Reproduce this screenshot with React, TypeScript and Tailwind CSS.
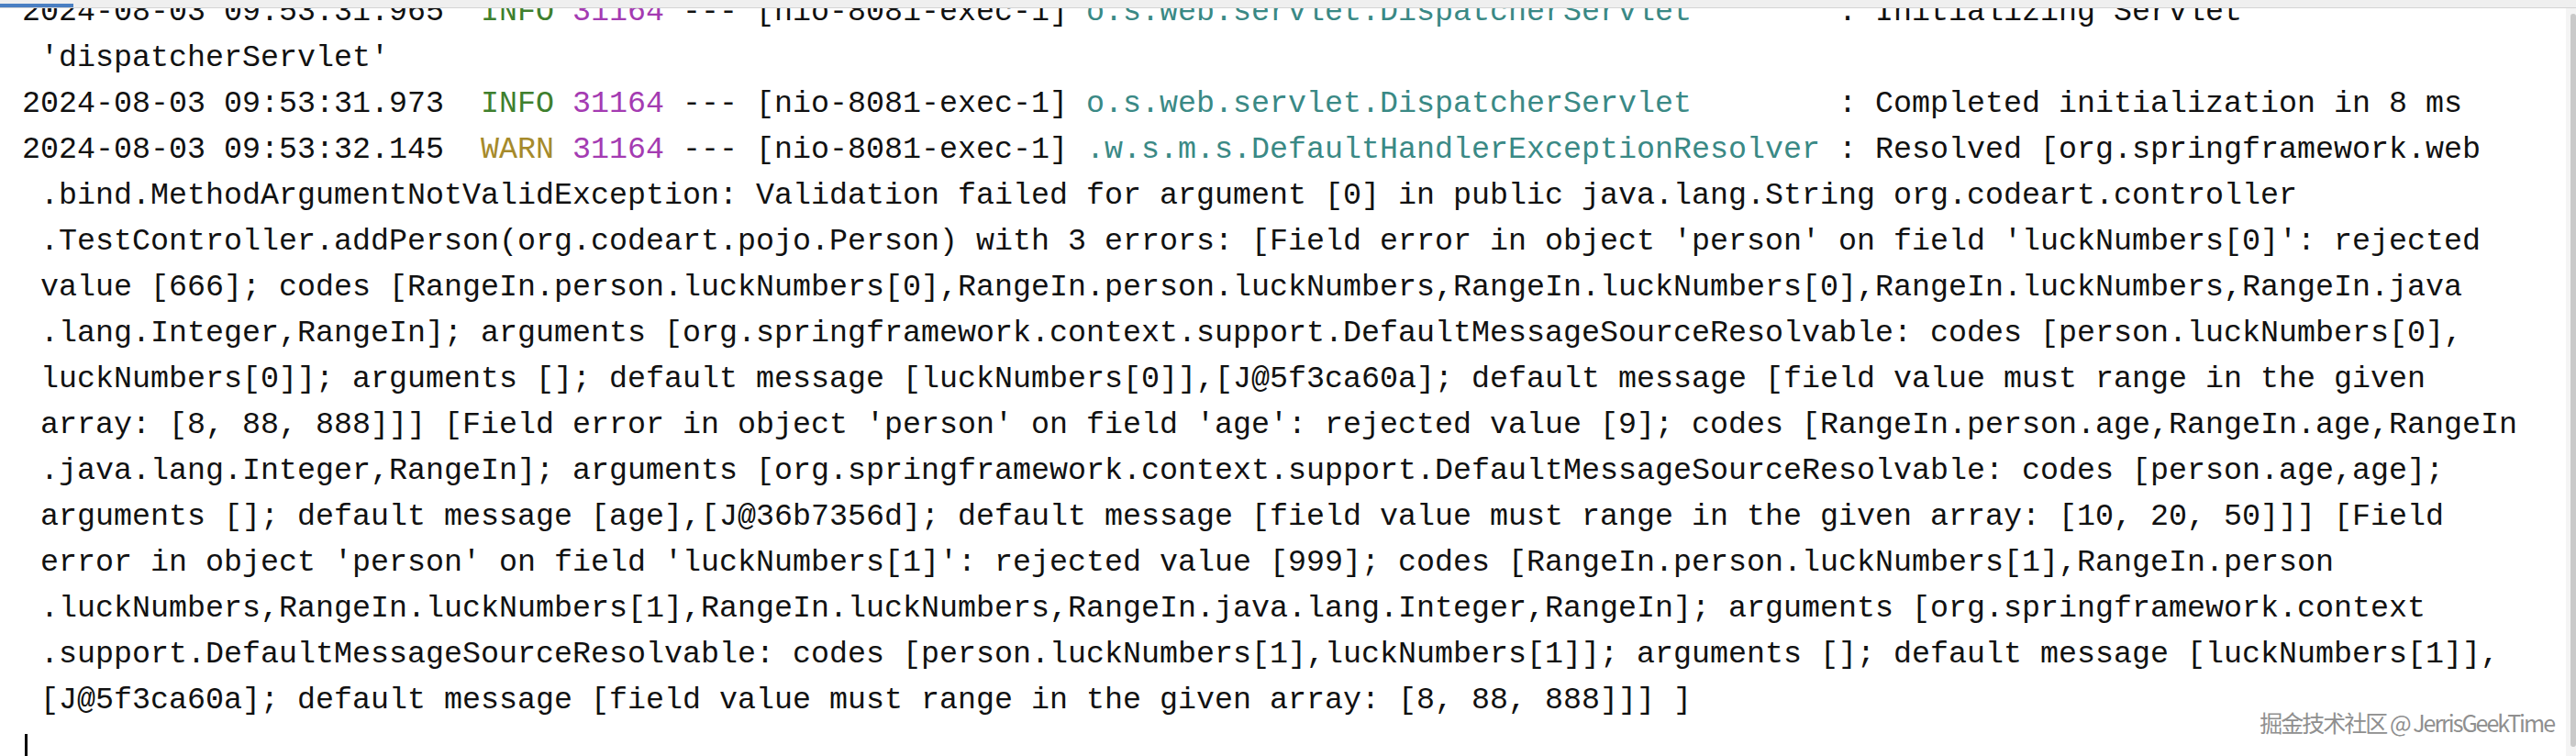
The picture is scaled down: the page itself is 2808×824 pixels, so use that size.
import React from "react";

const PURPLE = "text-[#a43bb2]";
const TEAL = "text-[#3a8985]";

function Header({ ts, level, logger, msg }: { ts: string; level: "INFO" | "WARN"; logger: string; msg: string }) {
  return (
    <>
      {ts + "  "}
      <span className={level === "INFO" ? "text-[#3f7f2e]" : "text-[#a68a2b]"}>{level}</span>{" "}
      <span className={PURPLE}>31164</span>
      {" --- [nio-8081-exec-1] "}
      <span className={TEAL}>{logger}</span>
      {" : " + msg}
    </>
  );
}

const cont: string[] = [
  " .bind.MethodArgumentNotValidException: Validation failed for argument [0] in public java.lang.String org.codeart.controller",
  " .TestController.addPerson(org.codeart.pojo.Person) with 3 errors: [Field error in object 'person' on field 'luckNumbers[0]': rejected",
  " value [666]; codes [RangeIn.person.luckNumbers[0],RangeIn.person.luckNumbers,RangeIn.luckNumbers[0],RangeIn.luckNumbers,RangeIn.java",
  " .lang.Integer,RangeIn]; arguments [org.springframework.context.support.DefaultMessageSourceResolvable: codes [person.luckNumbers[0],",
  " luckNumbers[0]]; arguments []; default message [luckNumbers[0]],[J@5f3ca60a]; default message [field value must range in the given",
  " array: [8, 88, 888]]] [Field error in object 'person' on field 'age': rejected value [9]; codes [RangeIn.person.age,RangeIn.age,RangeIn",
  " .java.lang.Integer,RangeIn]; arguments [org.springframework.context.support.DefaultMessageSourceResolvable: codes [person.age,age];",
  " arguments []; default message [age],[J@36b7356d]; default message [field value must range in the given array: [10, 20, 50]]] [Field",
  " error in object 'person' on field 'luckNumbers[1]': rejected value [999]; codes [RangeIn.person.luckNumbers[1],RangeIn.person",
  " .luckNumbers,RangeIn.luckNumbers[1],RangeIn.luckNumbers,RangeIn.java.lang.Integer,RangeIn]; arguments [org.springframework.context",
  " .support.DefaultMessageSourceResolvable: codes [person.luckNumbers[1],luckNumbers[1]]; arguments []; default message [luckNumbers[1]],",
  " [J@5f3ca60a]; default message [field value must range in the given array: [8, 88, 888]]] ]",
];

export default function App() {
  const row = "h-[50px] whitespace-pre";
  return (
    <div className="relative w-[2808px] h-[824px] bg-white overflow-hidden flex flex-col">
      <div className="h-[9px] shrink-0 bg-[#efefef] border-b border-[#d4d4d4] flex items-end relative z-10">
        <div className="w-[80px] h-[4px] bg-[#4a7fc2]" />
      </div>
      <div className="flex flex-1 min-h-0">
        <div className="flex-1 min-w-0 overflow-hidden pl-[24px] text-[#111111] font-['Liberation_Mono',monospace] text-[33.33px] leading-[50px]">
          <div className="-mt-[21px] flex flex-col">
            <div className={row}>
              <Header ts="2024-08-03 09:53:31.965" level="INFO" logger="o.s.web.servlet.DispatcherServlet       " msg="Initializing Servlet" />
            </div>
            <div className={row}>{" 'dispatcherServlet'"}</div>
            <div className={row}>
              <Header ts="2024-08-03 09:53:31.973" level="INFO" logger="o.s.web.servlet.DispatcherServlet       " msg="Completed initialization in 8 ms" />
            </div>
            <div className={row}>
              <Header ts="2024-08-03 09:53:32.145" level="WARN" logger=".w.s.m.s.DefaultHandlerExceptionResolver" msg="Resolved [org.springframework.web" />
            </div>
            {cont.map((t, i) => (
              <div key={i} className={row}>
                {t}
              </div>
            ))}
            <div className="h-[50px] flex items-end">
              <div className="ml-[3px] w-[3px] h-[38px] bg-black" />
            </div>
          </div>
        </div>
        <div className="w-[11px] shrink-0 bg-[#f4f4f4] flex justify-end pt-[6px]">
          <div className="w-[6px] h-[799px] rounded-b-[3px] rounded-t-[3px] bg-[#c9c9c9]" />
        </div>
      </div>
      <div className="absolute right-[24px] bottom-[22px] text-[25px] leading-[30px] text-[#8f8f8f] font-['Noto_Sans_CJK_SC','Noto_Sans',sans-serif] [text-shadow:1px_1px_0_#ffffff,-1px_-1px_0_#ffffff,1px_-1px_0_#ffffff,-1px_1px_0_#ffffff] tracking-[-2px]">
        掘金技术社区 @ JerrisGeekTime
      </div>
    </div>
  );
}
